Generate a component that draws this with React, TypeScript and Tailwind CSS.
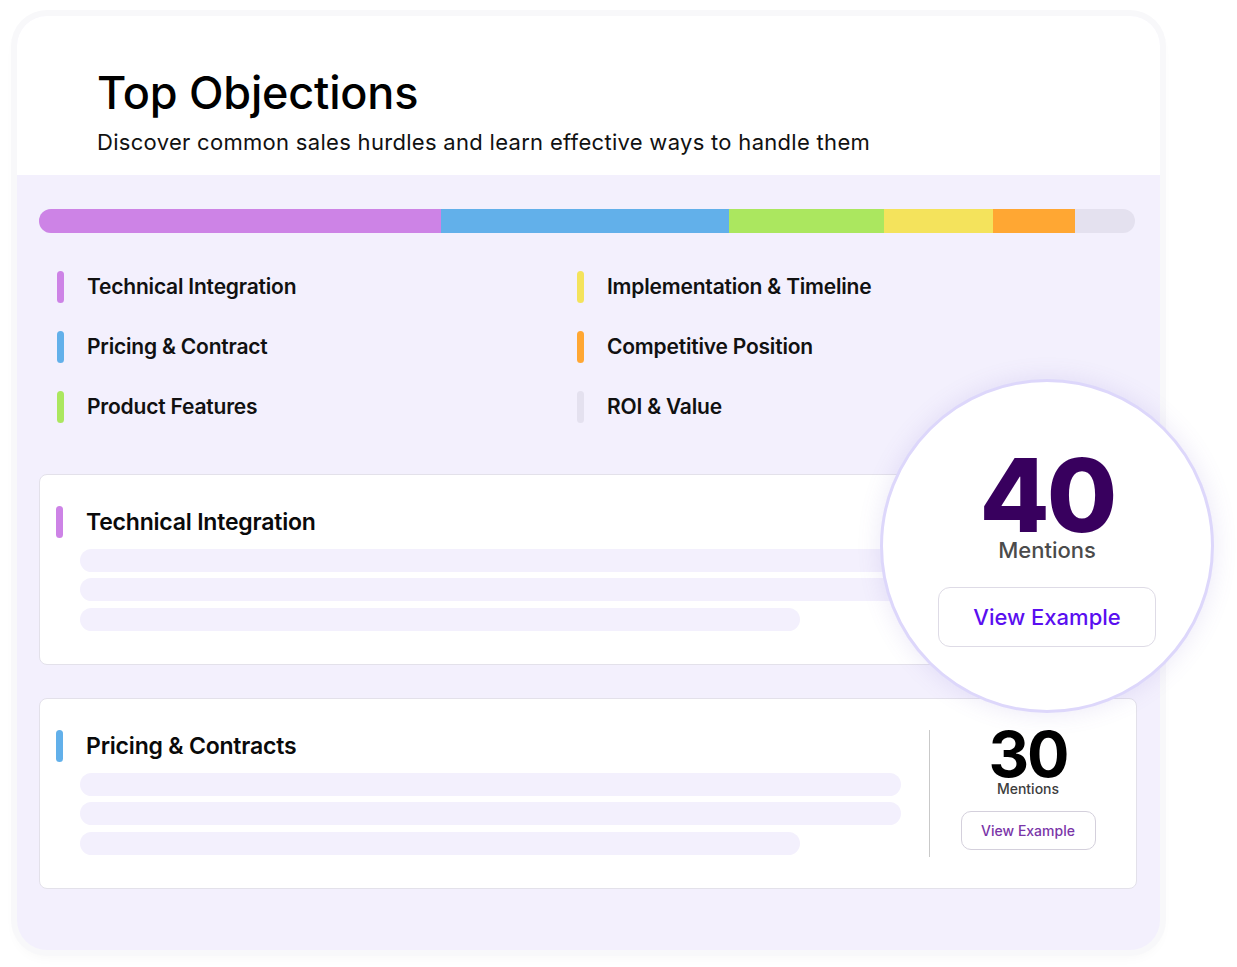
import React from 'react';

const segments = [
  { color: 'bg-[#cd83e6]', width: 'w-[402px]' },
  { color: 'bg-[#62b0ea]', width: 'w-[288px]' },
  { color: 'bg-[#abe75f]', width: 'w-[155px]' },
  { color: 'bg-[#f4e35c]', width: 'w-[109px]' },
  { color: 'bg-[#ffa733]', width: 'w-[82px]' },
];

const legend = [
  { label: 'Technical Integration', color: 'bg-[#cd83e6]' },
  { label: 'Implementation & Timeline', color: 'bg-[#f4e35c]' },
  { label: 'Pricing & Contract', color: 'bg-[#62b0ea]' },
  { label: 'Competitive Position', color: 'bg-[#ffa733]' },
  { label: 'Product Features', color: 'bg-[#abe75f]' },
  { label: 'ROI & Value', color: 'bg-[#e4e1ef]' },
];

const inter = { fontFamily: 'Inter, "Liberation Sans", sans-serif' };

function ObjectionCard({ title, color, count }: { title: string; color: string; count?: number }) {
  return (
    <div className="flex h-[191px] rounded-[8px] border border-[#e3e1ea] bg-white" style={inter}>
      <div className="w-[889px] pl-[16px] pt-[31px]">
        <div className="flex h-8 items-center gap-[23px]">
          <div className={`h-8 w-[7px] rounded-full ${color}`} />
          <span className="text-[23px] font-semibold tracking-[-0.2px] text-[#0a0a0a]">{title}</span>
        </div>
        <div className="ml-[24px] mt-[11px] flex flex-col">
          <div className="h-[23px] w-[821px] rounded-full bg-[#f3f0fd]" />
          <div className="mt-[6px] h-[23px] w-[821px] rounded-full bg-[#f3f0fd]" />
          <div className="mt-[7px] h-[23px] w-[720px] rounded-full bg-[#f3f0fd]" />
        </div>
      </div>
      <div className="mt-[31px] h-[127px] w-px bg-[#c9c9c9]" />
      {count !== undefined ? (
        <div className="flex flex-1 flex-col items-center pr-[10px] pt-[27px]">
          <div className="text-[63px] font-bold leading-[56px] tracking-[-2px] text-black">{count}</div>
          <div className="text-[14px] font-medium leading-[14px] text-[#3d3d3d]">Mentions</div>
          <button className="mt-[15px] flex h-[39px] w-[135px] items-center justify-center rounded-[10px] border border-[#d4d0dc] bg-white text-[14px] font-medium text-[#7a35a8]">
            View Example
          </button>
        </div>
      ) : (
        <div className="flex-1" />
      )}
    </div>
  );
}

export default function App() {
  return (
    <div className="min-h-screen bg-white pl-[17px] pt-4">
      <div className="relative h-[934px] w-[1143px] rounded-[30px] bg-[#f3f0fd] shadow-[0_0_0_6px_#f8f8fa,0_6px_14px_rgba(0,0,0,0.04)]">
        {/* Header */}
        <div className="h-[159px] rounded-t-[30px] bg-white pl-[80px] pt-[54px]" style={inter}>
          <h1 className="text-[45px] font-medium leading-none tracking-[-0.2px] text-black">Top Objections</h1>
          <p className="mt-[16px] text-[22px] leading-[22px] tracking-[0.3px] text-[#111]">
            Discover common sales hurdles and learn effective ways to handle them
          </p>
        </div>

        {/* Body */}
        <div className="px-[22px] pt-[34px]">
          <div className="flex h-6 w-[1096px] overflow-hidden rounded-full bg-[#e4e1ef]">
            {segments.map((s, i) => (
              <div key={i} className={`h-full ${s.color} ${s.width}`} />
            ))}
          </div>

          <div className="mt-[38px] grid grid-cols-[520px_1fr] gap-y-[28px] pl-[18px]" style={inter}>
            {legend.map((l) => (
              <div key={l.label} className="flex h-8 items-center gap-[23px]">
                <div className={`h-8 w-[7px] rounded-full ${l.color}`} />
                <span className="text-[21px] font-semibold tracking-[-0.2px] text-[#111]">{l.label}</span>
              </div>
            ))}
          </div>

          <div className="mt-[51px] flex flex-col gap-[33px] pr-[1px]">
            <ObjectionCard title="Technical Integration" color="bg-[#cd83e6]" />
            <ObjectionCard title="Pricing & Contracts" color="bg-[#62b0ea]" count={30} />
          </div>
        </div>

        {/* Magnified count */}
        <div
          className="absolute left-[863px] top-[363px] flex h-[334px] w-[334px] flex-col items-center rounded-full border-[3px] border-[#ddd7fb] bg-white pt-[69px] shadow-[0_0_24px_rgba(110,90,200,0.14)]"
          style={inter}
        >
          <div className="text-[102px] font-extrabold leading-[88px] tracking-[-3px] text-[#38005e]">40</div>
          <div className="text-[22px] font-medium leading-[22px] text-[#4b4b4b]">Mentions</div>
          <button className="mt-[26px] flex h-[60px] w-[218px] items-center justify-center rounded-[12px] border border-[#dedbe6] bg-white text-[22px] font-medium text-[#5a0ff0]">
            View Example
          </button>
        </div>
      </div>
    </div>
  );
}
